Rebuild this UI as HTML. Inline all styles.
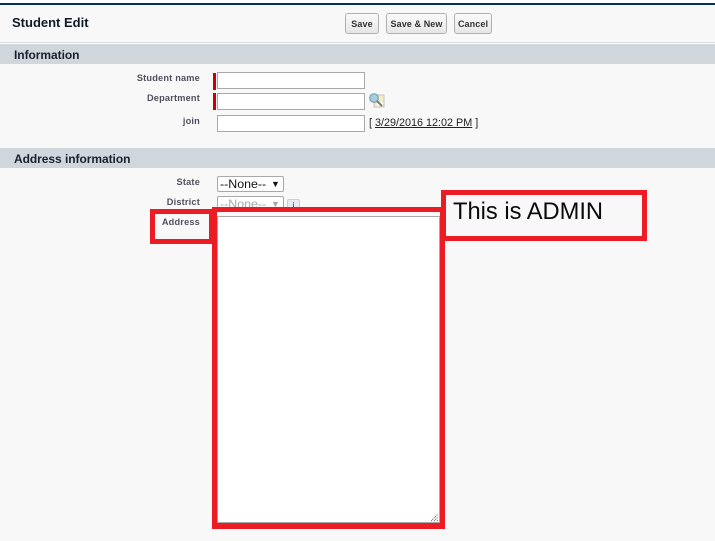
<!DOCTYPE html>
<html><head><meta charset="utf-8">
<style>
html,body{margin:0;padding:0;}
body{width:715px;height:541px;overflow:hidden;background:#f8f8f8;position:relative;font-family:"Liberation Sans",Arial,sans-serif;}
.a{position:absolute;box-sizing:border-box;white-space:nowrap;}
.lbl{font-size:9.2px;font-weight:bold;color:#50505e;text-align:right;right:515px;line-height:12px;letter-spacing:.2px;}
.inp{left:217px;width:148px;height:17px;background:#fff;border:1px solid #a8a8a8;}
.req{left:213px;width:3px;height:17px;background:#c00;}
.band{left:0;width:715px;height:20px;background:#cfd6dc;font-size:12px;font-weight:bold;color:#1a2030;line-height:22px;padding-left:14px;letter-spacing:-.05px;}
.btn{top:13px;height:21px;background:linear-gradient(#fafafa,#e6e6e6);border:1px solid #b0b0b0;border-radius:3px;font-size:9px;font-weight:bold;color:#333;text-align:center;line-height:20px;letter-spacing:.1px;}
.sel{left:217px;width:67px;height:16px;background:#fff;border:1px solid #a8a8a8;border-radius:2px;font-size:12.4px;line-height:15px;padding-left:2px;color:#111;}
.red{background:#ed1c24;}
</style></head><body>
<div class="a" style="left:0;top:0;width:715px;height:3px;background:#fff"></div>
<div class="a" style="left:0;top:3px;width:715px;height:2px;background:#04305c"></div>
<div class="a" style="left:12px;top:15px;font-size:13px;font-weight:bold;color:#111827;line-height:15px">Student Edit</div>
<div class="a btn" style="left:345px;width:34px">Save</div>
<div class="a btn" style="left:386px;width:61px">Save &amp; New</div>
<div class="a btn" style="left:454px;width:38px">Cancel</div>
<div class="a" style="left:0;top:42px;width:715px;height:1px;background:#dcdcdc"></div>
<div class="a" style="left:0;top:43px;width:715px;height:1px;background:#fff"></div>
<div class="a band" style="top:44px">Information</div>

<div class="a lbl" style="top:72px">Student name</div>
<div class="a req" style="top:73px"></div>
<div class="a inp" style="top:72px"></div>
<div class="a lbl" style="top:92px">Department</div>
<div class="a req" style="top:93px"></div>
<div class="a inp" style="top:93px"></div>
<svg class="a" style="left:369px;top:93px" width="16" height="15" viewBox="0 0 16 15">
<rect x="5" y="2" width="10" height="12" fill="#f4ecc4" stroke="#c4c4c4" stroke-width="1"/>
<rect x="8" y="9" width="6" height="4" fill="#fff"/>
<circle cx="5" cy="5" r="4.3" fill="#a6cde0" stroke="#6a96ac" stroke-width="1"/>
<path d="M8 8l5 5" stroke="#777" stroke-width="2"/>
</svg>
<div class="a lbl" style="top:115px">join</div>
<div class="a inp" style="top:115px"></div>
<div class="a" style="left:369px;top:117px;font-size:10.8px;line-height:13px;color:#222">[ <span style="text-decoration:underline">3/29/2016 12:02 PM</span> ]</div>

<div class="a band" style="top:148px">Address information</div>
<div class="a lbl" style="top:176px">State</div>
<div class="a sel" style="top:176px">--None--<span class="a" style="left:53px;top:0;font-size:9px">▼</span></div>
<div class="a lbl" style="top:196px">District</div>
<div class="a sel" style="top:196px;color:#a8a8a8;height:16px">--None--<span class="a" style="left:53px;top:0;font-size:9px;color:#a8a8a8">▼</span></div>
<div class="a" style="left:287px;top:199px;width:13px;height:13px;background:#e8ecf0;border:1px solid #ccd;border-radius:2px;font-size:8px;font-weight:bold;color:#3a6ea5;text-align:center;line-height:11px">i</div>
<div class="a lbl" style="top:216px">Address</div>

<div class="a" style="left:217px;top:216px;width:223px;height:307px;background:#fff;border:1px solid #a8a8a8"></div>
<svg class="a" style="left:431px;top:513px" width="8" height="9" viewBox="0 0 8 9">
<path d="M0 8L7 1M3 8L7 4M6 8L7 7" stroke="#555" stroke-width="1" stroke-dasharray="1 1" fill="none"/>
</svg>

<div class="a red" style="left:212px;top:207px;width:233px;height:5px"></div>
<div class="a red" style="left:212px;top:207px;width:5px;height:322px"></div>
<div class="a red" style="left:440px;top:207px;width:5px;height:322px"></div>
<div class="a red" style="left:212px;top:523px;width:233px;height:6px"></div>
<div class="a" style="left:150px;top:209px;width:62px;height:35px;border:5px solid #ed1c24;border-right-width:3px"></div>
<div class="a" style="left:441px;top:190px;width:206px;height:51px;border:5px solid #ed1c24"></div>
<div class="a" style="left:453px;top:198px;font-size:23.7px;line-height:29px;color:#0a0a0a">This is ADMIN</div>
</body></html>
